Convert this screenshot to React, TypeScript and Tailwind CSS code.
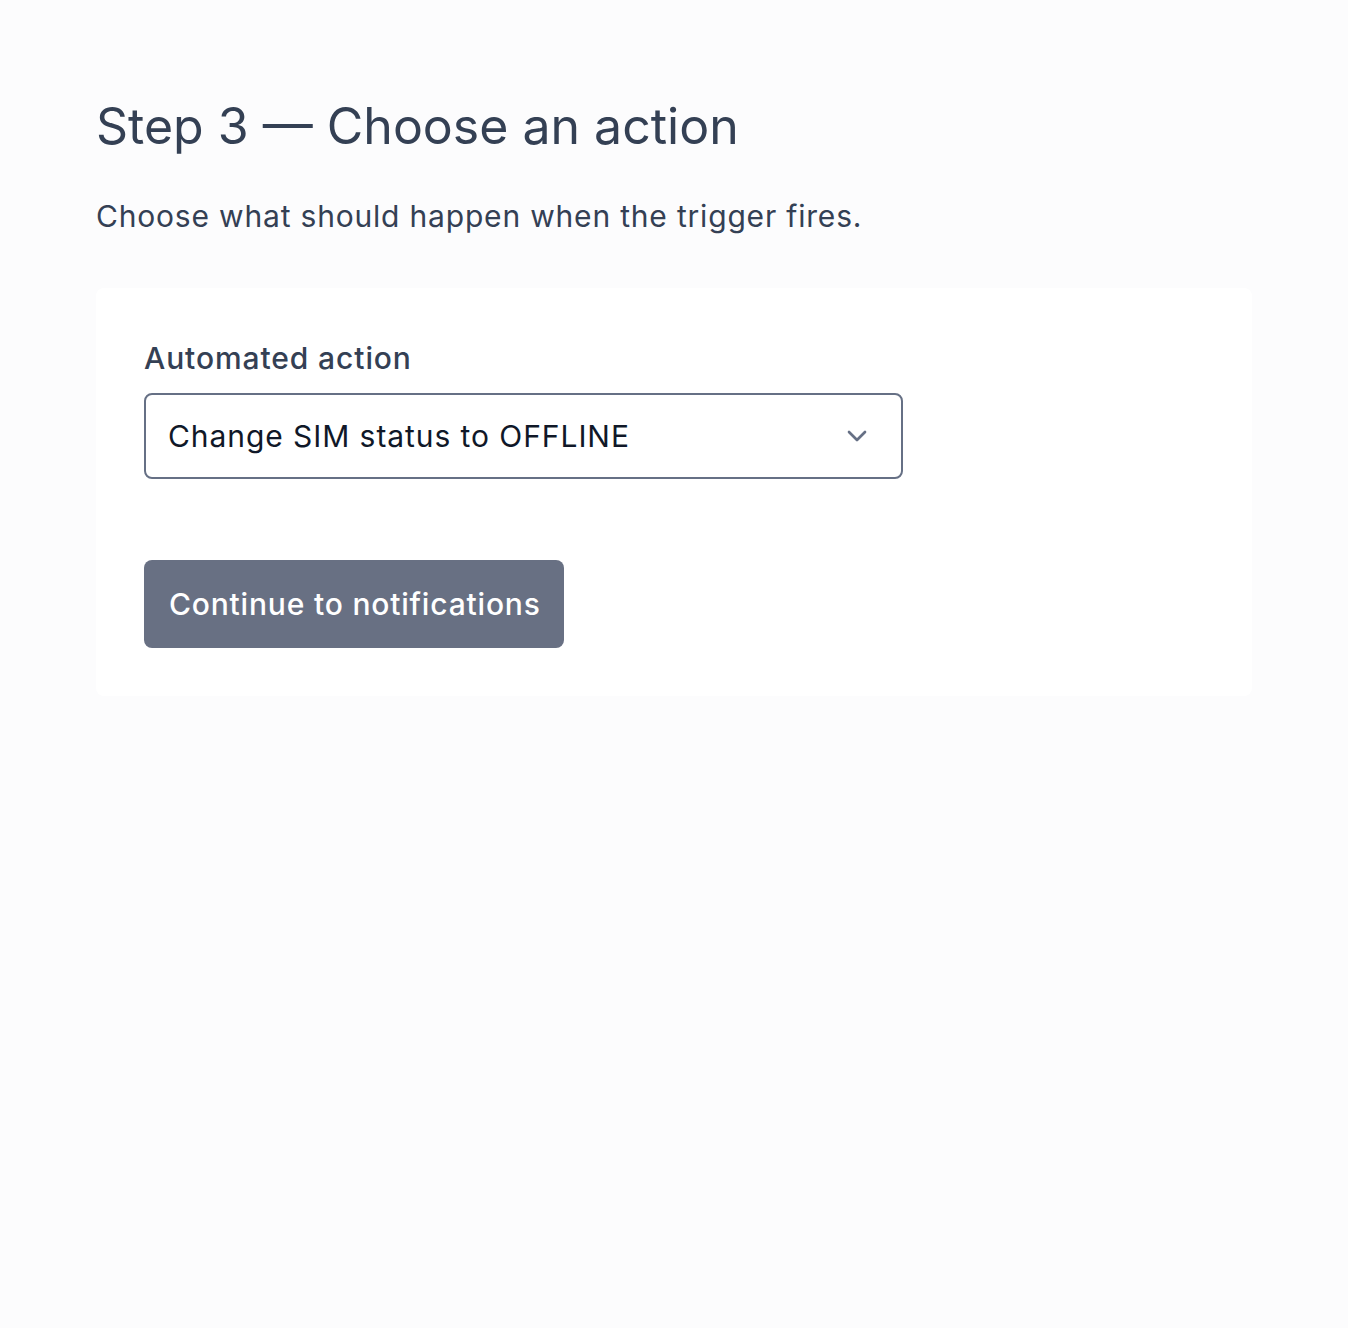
import { ChevronDown } from "lucide-react";

export default function App() {
  return (
    <div
      className="min-h-screen bg-[#fcfcfd] px-24 pt-[96px]"
      style={{ fontFamily: "Inter, 'Noto Sans', sans-serif" }}
    >
      <h1 className="text-[50px] leading-[60px] font-normal text-[#344054]">
        Step 3 — Choose an action
      </h1>
      <p className="mt-[38px] text-[30px] leading-[45px] tracking-[0.027em] text-[#344054]">
        Choose what should happen when the trigger fires.
      </p>

      <div className="mt-[49px] rounded-lg bg-white p-12">
        <label className="block text-[30px] leading-[45px] font-medium tracking-[0.03em] text-[#344054]">
          Automated action
        </label>
        <div className="mt-3 flex h-[86px] w-[759px] items-center justify-between rounded-lg border-2 border-[#667085] bg-white pl-[22px] pr-[28px]">
          <span className="text-[30px] tracking-[0.031em] text-[#101828]">
            Change SIM status to OFFLINE
          </span>
          <ChevronDown className="h-8 w-8 text-[#667085]" strokeWidth={2} />
        </div>

        <button className="mt-[81px] flex h-[88px] items-center rounded-lg bg-[#687083] pl-[25px] pr-[23px] text-[30px] font-medium tracking-[0.027em] text-white">
          Continue to notifications
        </button>
      </div>
    </div>
  );
}
